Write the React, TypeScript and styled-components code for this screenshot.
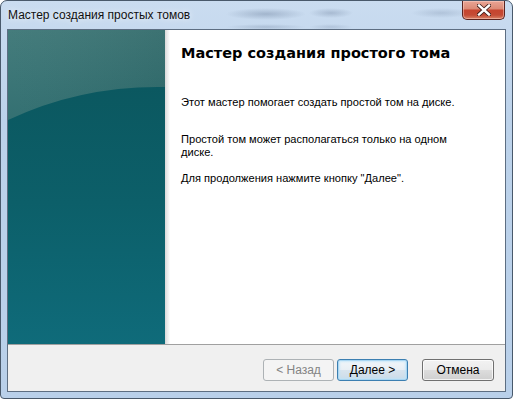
import React from "react";
import styled, { createGlobalStyle } from "styled-components";

const Global = createGlobalStyle`
  html, body { margin: 0; padding: 0; background: #ffffff; }
  body { width: 513px; height: 399px; overflow: hidden; }
  * { box-sizing: border-box; }
`;

const Window = styled.div`
  width: 513px;
  height: 399px;
  display: flex;
  flex-direction: column;
  border: 1px solid #49596b;
  border-radius: 7px 7px 4px 4px;
  padding: 0 6px 6px 6px;
  background-color: #bed4ec;
  background-image:
    radial-gradient(ellipse 40px 6px at 265px 13px, rgba(90, 110, 140, 0.35), transparent),
    radial-gradient(ellipse 22px 5px at 330px 12px, rgba(90, 110, 140, 0.3), transparent),
    radial-gradient(ellipse 30px 5px at 440px 12px, rgba(90, 110, 140, 0.22), transparent),
    radial-gradient(ellipse 40px 3px at 265px 26px, rgba(90, 110, 140, 0.25), transparent),
    radial-gradient(ellipse 22px 3px at 330px 26px, rgba(90, 110, 140, 0.2), transparent),
    linear-gradient(180deg, #cadcf0 0%, #bcd2ea 30%, #b9d0ea 100%);
`;

const TitleBar = styled.div`
  height: 28px;
  flex: none;
  display: flex;
  align-items: flex-start;
  justify-content: space-between;
  padding-left: 1px;
`;

const Title = styled.div`
  font-family: "Liberation Sans", Arial, sans-serif;
  font-size: 12px;
  color: #111111;
  margin-top: 7px;
  text-shadow: 0 0 6px rgba(255, 255, 255, 0.9);
`;

const CloseButton = styled.div`
  width: 43px;
  height: 19px;
  margin-right: 1px;
  border: 1px solid #5a2420;
  border-top: none;
  border-radius: 0 0 5px 5px;
  background: linear-gradient(180deg, #e9a595 0%, #dc8b77 42%, #c6452f 52%, #c44b35 78%, #da8468 100%);
  box-shadow: inset 0 0 0 1px rgba(255, 220, 210, 0.45);
  display: flex;
  align-items: center;
  justify-content: center;
`;

const Client = styled.div`
  flex: 1;
  display: flex;
  flex-direction: column;
  border: 1px solid #5d6e82;
  background: #f0f0f0;
`;

const Main = styled.div`
  height: 314px;
  flex: none;
  display: flex;
  background: #ffffff;
`;

const SidePanel = styled.div`
  width: 157px;
  flex: none;
  display: flex;
  background: #0e6774;
`;

const Content = styled.div`
  flex: 1;
  padding: 14px 15px 0 16px;
  background: linear-gradient(90deg, #d8d8d8 0px, #e9e9e9 2px, #f6f6f6 4px, #ffffff 5px);
  font-family: "Liberation Sans", Arial, sans-serif;
  color: #000000;
`;

const Heading = styled.h1`
  margin: 0 0 34px 0;
  font-family: "DejaVu Sans", Verdana, sans-serif;
  font-weight: bold;
  font-size: 14.5px;
  line-height: 18px;
`;

const Para = styled.p<{ $gap: number }>`
  margin: 0 0 ${(p) => p.$gap}px 0;
  font-size: 11.1px;
  line-height: 13px;
`;

const Footer = styled.div`
  flex: 1;
  border-top: 1px solid #a0a0a0;
  display: flex;
  justify-content: flex-end;
  align-items: flex-start;
  padding: 14px 11px 0 0;
`;

type Variant = "default" | "disabled" | "normal";

const borderFor = (v?: Variant) => (v === "default" ? "#3c7fb1" : v === "disabled" ? "#adb2b5" : "#707070");
const bgFor = (v?: Variant) =>
  v === "disabled"
    ? "#f4f4f4"
    : v === "default"
    ? "linear-gradient(180deg, #f1f6fa 0%, #e8eff5 50%, #d8e4ee 51%, #cbdbe8 100%)"
    : "linear-gradient(180deg, #f2f2f2 0%, #ebebeb 50%, #dddddd 51%, #cfcfcf 100%)";
const shadowFor = (v?: Variant) =>
  v === "default"
    ? "inset 0 0 0 1px #a9d6f2, inset 0 0 2px 2px rgba(190, 228, 250, 0.7)"
    : v === "disabled"
    ? "none"
    : "inset 0 0 0 1px rgba(255,255,255,0.75)";

const Button = styled.button<{ $variant?: Variant; $ml?: number; $w?: number }>`
  width: ${(p) => p.$w ?? 72}px;
  height: 22px;
  margin-left: ${(p) => p.$ml ?? 0}px;
  font-family: "Liberation Sans", Arial, sans-serif;
  font-size: 12px;
  padding: 0;
  border-radius: 3px;
  border: 1px solid ${(p) => borderFor(p.$variant)};
  color: ${(p) => (p.$variant === "disabled" ? "#838383" : "#000000")};
  background: ${(p) => bgFor(p.$variant)};
  box-shadow: ${(p) => shadowFor(p.$variant)};
`;

function SideArt() {
  return (
    <svg width="157" height="314" viewBox="0 0 157 314">
      <defs>
        <linearGradient id="upper" x1="0" y1="0" x2="0" y2="1">
          <stop offset="0" stopColor="#3f7878" />
          <stop offset="1" stopColor="#2c6b6d" />
        </linearGradient>
        <linearGradient id="upperH" x1="0" y1="0" x2="1" y2="0">
          <stop offset="0" stopColor="#ffffff" stopOpacity="0.03" />
          <stop offset="1" stopColor="#000000" stopOpacity="0.05" />
        </linearGradient>
        <linearGradient id="lower" x1="0" y1="0" x2="0" y2="1">
          <stop offset="0" stopColor="#0b5860" />
          <stop offset="0.45" stopColor="#0c5f69" />
          <stop offset="1" stopColor="#0f6b7a" />
        </linearGradient>
      </defs>
      <rect x="0" y="0" width="157" height="100" fill="url(#upper)" />
      <rect x="0" y="0" width="157" height="100" fill="url(#upperH)" />
      <path d="M0 90 A300 246 0 0 1 157 57 L157 314 L0 314 Z" fill="url(#lower)" />
    </svg>
  );
}

export default function App() {
  return (
    <>
      <Global />
      <Window>
        <TitleBar>
          <Title>Мастер создания простых томов</Title>
          <CloseButton>
            <svg width="14" height="12" viewBox="0 0 14 12">
              <path
                d="M2 1.5 L12 10.5 M12 1.5 L2 10.5"
                stroke="#3b1a16"
                strokeWidth="4"
                strokeLinecap="square"
              />
              <path
                d="M2 1.5 L12 10.5 M12 1.5 L2 10.5"
                stroke="#ffffff"
                strokeWidth="2.4"
                strokeLinecap="square"
              />
            </svg>
          </CloseButton>
        </TitleBar>
        <Client>
          <Main>
            <SidePanel>
              <SideArt />
            </SidePanel>
            <Content>
              <Heading>Мастер создания простого тома</Heading>
              <Para $gap={24}>Этот мастер помогает создать простой том на диске.</Para>
              <Para $gap={13}>
                Простой том может располагаться только на одном
                <br />
                диске.
              </Para>
              <Para $gap={0}>Для продолжения нажмите кнопку "Далее".</Para>
            </Content>
          </Main>
          <Footer>
            <Button $variant="disabled" $w={71} disabled>
              &lt; Назад
            </Button>
            <Button $variant="default" $ml={3} $w={71}>
              Далее &gt;
            </Button>
            <Button $variant="normal" $ml={14} $w={72}>
              Отмена
            </Button>
          </Footer>
        </Client>
      </Window>
    </>
  );
}
